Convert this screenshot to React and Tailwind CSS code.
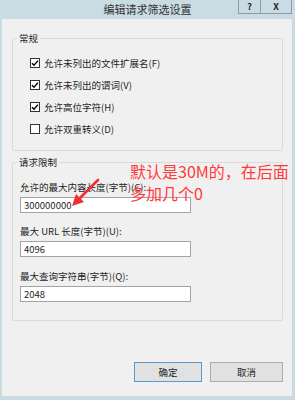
import React from "react";

function Check({ checked, label }) {
  return (
    <div className="flex items-center h-[22px]">
      <div className="w-[10px] h-[10px] ml-[17px] border border-[#333333] bg-white flex items-center justify-center">
        {checked && (
          <svg width="8" height="8" viewBox="0 0 8 8">
            <path d="M1 4.2 L3 6.2 L7 1.6" fill="none" stroke="#000" strokeWidth="1.4" />
          </svg>
        )}
      </div>
      <span className="ml-[4px] text-[9.5px] leading-[12px] text-[#1e1e1e]">{label}</span>
    </div>
  );
}

function Field({ label, value, className }) {
  return (
    <div className={className}>
      <div className="ml-[7px] text-[9.5px] leading-[12px] text-[#1e1e1e]">{label}</div>
      <div className="ml-[7px] mt-[4px] w-[171px] h-[16px] border border-[#a4a4a4] bg-white flex items-center pl-[3px] text-[9.5px] text-[#1e1e1e]">
        {value}
      </div>
    </div>
  );
}

export default function App() {
  return (
    <div
      className="w-[295px] h-[400px] bg-[#c9dce4] relative overflow-hidden"
      style={{ fontFamily: '"Noto Sans CJK SC", "Noto Sans", sans-serif' }}
    >
      {/* title bar */}
      <div className="h-[19px] flex items-center justify-center text-[11px] text-[#333] leading-none">
        编辑请求筛选设置
      </div>
      <div className="absolute top-0 right-[3px] flex border-x border-b border-[#8f9ba3]">
        <div className="w-[22px] h-[13px] flex items-center justify-center text-[9px] leading-[12px] font-bold text-[#222] border-r border-[#8f9ba3]">?</div>
        <div className="w-[30px] h-[13px] flex items-center justify-center text-[9px] leading-[12px] font-bold text-[#222]">X</div>
      </div>

      {/* client area */}
      <div className="ml-[2px] w-[290px] h-[377px] bg-[#f0f0f0] flex flex-col">
        <fieldset className="mt-[13px] ml-[10px] w-[271px] border border-[#dadada] rounded-[2px] pb-[10px]">
          <legend className="ml-[4px] px-[2px] text-[9.5px] leading-[12px] text-[#1e1e1e]">常规</legend>
          <div className="pt-[8px] flex flex-col">
            <Check checked label="允许未列出的文件扩展名(F)" />
            <Check checked label="允许未列出的谓词(V)" />
            <Check checked label="允许高位字符(H)" />
            <Check label="允许双重转义(D)" />
          </div>
        </fieldset>

        <fieldset className="mt-[5px] ml-[10px] w-[271px] border border-[#dadada] rounded-[2px] pb-[18px]">
          <legend className="ml-[4px] px-[2px] text-[9.5px] leading-[12px] text-[#1e1e1e]">请求限制</legend>
          <Field className="mt-[13px]" label="允许的最大内容长度(字节)(C):" value="300000000" />
          <Field className="mt-[12px]" label="最大 URL 长度(字节)(U):" value="4096" />
          <Field className="mt-[13px]" label="最大查询字符串(字节)(Q):" value="2048" />
        </fieldset>

        <div className="mt-[41px] flex ml-[132px] gap-[8px]">
          <div className="w-[68px] h-[20px] border border-[#5b9bd2] bg-[#e1e1e1] flex items-center justify-center text-[9.5px] text-[#1e1e1e]">确定</div>
          <div className="w-[73px] h-[20px] border border-[#adadad] bg-[#e1e1e1] flex items-center justify-center text-[9.5px] text-[#1e1e1e]">取消</div>
        </div>
      </div>

      {/* annotation */}
      <div className="absolute left-[130px] top-[160px] text-[16px] leading-[22px] text-[#ff3b3b]">
        <div>默认是30M的，在后面</div>
        <div>多加几个0</div>
      </div>
      <svg className="absolute left-[65px] top-[175px]" width="40" height="36" viewBox="0 0 40 36">
        <path d="M33 5 L14 24" stroke="#f03030" strokeWidth="2.6" strokeLinecap="round" />
        <path d="M7 31 L11 19 L19 27 Z" fill="#f03030" />
      </svg>
    </div>
  );
}
